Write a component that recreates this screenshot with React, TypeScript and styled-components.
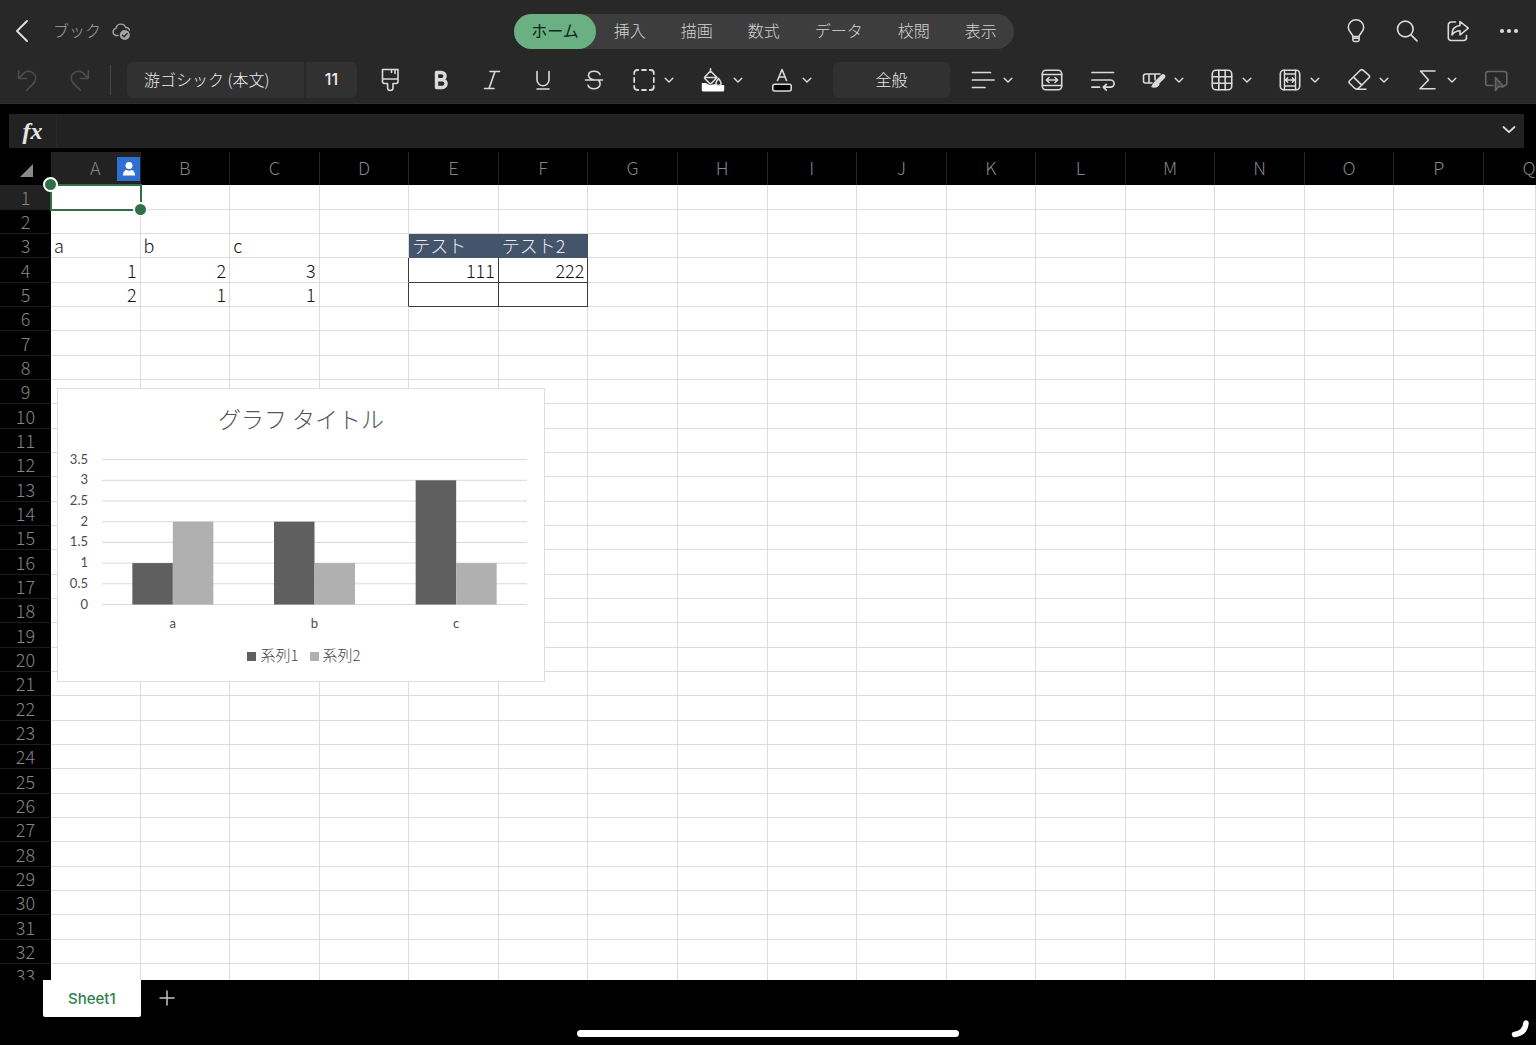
import React from "react";
import styled, { createGlobalStyle, css } from "styled-components";

const jp = `"Noto Sans CJK JP", "Noto Sans", sans-serif`;
const ui = `Inter, "Noto Sans CJK JP", sans-serif`;
const green = "#2f7048";

const GlobalStyle = createGlobalStyle`
  * { box-sizing: border-box; }
  html, body, #root { height: 100%; }
  body { margin: 0; background: #000; overflow: hidden; font-family: ${jp}; }
  button { appearance: none; border: 0; margin: 0; padding: 0; background: none; color: inherit; font: inherit; cursor: pointer; }
`;

const Page = styled.div`
  display: flex;
  flex-direction: column;
  height: 100vh;
  background: #000;
`;

/* ---------- Ribbon ---------- */

const Ribbon = styled.header`
  flex: none;
  background: #282828;
  color: #d6d6d6;
  border-bottom: 1px solid #2f2f2f;
`;

const TitleBar = styled.div`
  display: grid;
  grid-template-columns: 1fr auto 1fr;
  align-items: center;
  height: 56px;
  padding: 6px 2px 0 0;
`;

const TitleLeft = styled.div`
  display: flex;
  align-items: center;
  color: #a4a4a4;
`;

const BackButton = styled.button`
  display: grid;
  place-items: center;
  width: 44px;
  height: 32px;
  margin-right: 9px;
  color: #e0e0e0;
`;

const BookName = styled.h1`
  margin: 0 10px 0 0;
  padding-bottom: 2px;
  font-size: 16px;
  font-weight: 300;
  line-height: 24px;
`;

const Tabs = styled.nav`
  display: flex;
  gap: 1px;
  height: 35px;
  margin-right: 6px;
  border-radius: 18px;
  background: #3d3d3d;
`;

const Tab = styled.button<{ $active?: boolean }>`
  padding: 0 17px 2px;
  border-radius: 18px;
  font-size: 16px;
  font-weight: 300;
  line-height: 24px;
  color: #d4d4d4;
  ${(p) => p.$active && css`background: #6bb083; color: #10281a; font-weight: 400;`}
`;

const TitleActions = styled.div`
  display: flex;
  justify-content: flex-end;
`;

const ToolBar = styled.div`
  display: flex;
  align-items: center;
  height: 47px;
  padding: 0 15px 0 2px;
`;

const ToolButton = styled.button<{ $tone?: string }>`
  display: grid;
  place-items: center;
  flex: none;
  width: 51px;
  height: 36px;
  color: ${(p) => p.$tone ?? "#dadada"};
`;

const MenuButton = styled.button`
  display: flex;
  align-items: center;
  flex: none;
  gap: 8px;
  width: 69px;
  height: 36px;
  padding-left: 13px;
  color: #dadada;
`;

const Divider = styled.span`
  flex: none;
  width: 1px;
  height: 30px;
  margin: 0 16px 0 6px;
  background: #474747;
`;

const Field = styled.button<{ $width: number; $align?: string; $side?: "left" | "right"; $weight?: number }>`
  flex: none;
  width: ${(p) => p.$width}px;
  height: 36px;
  padding: 0 17px 2px;
  border-radius: ${(p) => (p.$side === "left" ? "6px 0 0 6px" : p.$side === "right" ? "0 6px 6px 0" : "6px")};
  background: #313131;
  color: #ececec;
  font-family: ${(p) => (p.$weight ? ui : jp)};
  font-size: 16px;
  font-weight: ${(p) => p.$weight ?? 300};
  line-height: 24px;
  text-align: ${(p) => p.$align ?? "center"};
  white-space: nowrap;
`;

const FieldPair = styled.div`
  display: flex;
  gap: 2px;
  margin-right: 7px;
`;

const NumberFormat = styled.div`
  display: flex;
  margin: 0 8px 0 7px;
`;

const ToolsEnd = styled.div`
  display: flex;
  flex: 1;
  justify-content: space-between;
  ${MenuButton} { width: 68px; }
`;

/* ---------- Formula bar ---------- */

const FormulaBar = styled.div`
  display: flex;
  flex: none;
  height: 34px;
  margin: 10px 12px 4px 9px;
  background: #222;
`;

const FxButton = styled.button`
  width: 48px;
  border-right: 1px solid #282828;
  color: #e6e6e6;
  font: italic bold 24px/32px "Liberation Serif", serif;
`;

const FormulaInput = styled.input`
  flex: 1;
  min-width: 0;
  padding: 0 8px;
  border: 0;
  outline: 0;
  background: transparent;
  color: #e6e6e6;
  font: 16px/24px ${jp};
`;

const ExpandButton = styled.button`
  display: grid;
  place-items: center;
  width: 30px;
  height: 30px;
  color: #dcdcdc;
`;

/* ---------- Sheet ---------- */

const SheetArea = styled.main`
  position: relative;
  flex: 1;
  min-height: 0;
  overflow: hidden;
`;

const Grid = styled.table`
  width: 100%;
  table-layout: fixed;
  border-collapse: separate;
  border-spacing: 0;
  font-size: 18px;
  font-weight: 300;
  line-height: 24px;
`;

const HeadCol = styled.col`
  width: 51px;
`;

const TailCol = styled.col`
  width: 52px;
`;

const Corner = styled.td`
  height: 33px;
  padding: 3px 18px 0 0;
  text-align: right;
  svg { display: block; margin-left: auto; }
`;

const ColHead = styled.th<{ $active?: boolean; $last?: boolean }>`
  position: relative;
  height: 33px;
  padding: 0 0 4px;
  overflow: hidden;
  border-right: 1px solid #262626;
  background: ${(p) => (p.$active ? "#222" : "#000")};
  color: #858585;
  font-weight: 300;
  text-align: center;
  ${(p) => p.$last && css`border-right: 0; span { display: block; width: 90px; }`}
`;

const UserBadge = styled.i`
  position: absolute;
  right: -1px;
  top: 5px;
  display: grid;
  place-items: center;
  width: 24px;
  height: 24px;
  background: #2e6fd1;
`;

const Row = styled.tr`
  height: 24px;
  &:nth-child(3n + 1) { height: 25px; }
`;

const RowHead = styled.th<{ $active?: boolean }>`
  padding: 0;
  border-bottom: 1px solid #1c1c1c;
  background: ${(p) => (p.$active ? "#222" : "#000")};
  color: #858585;
  font-weight: 300;
  line-height: 23px;
  text-align: center;
`;

type Edge = { $right?: boolean; $bottom?: boolean; $title?: boolean; $num?: boolean };

const Cell = styled.td<Edge>`
  position: relative;
  padding: 0 3px;
  border-right: 1px solid ${(p) => (p.$right ? "#3c3c3c" : "#dcdcdc")};
  border-bottom: 1px solid ${(p) => (p.$bottom ? "#3c3c3c" : "#dcdcdc")};
  background: #fff;
  color: #111;
  line-height: 23px;
  white-space: nowrap;
  text-align: ${(p) => (p.$num ? "right" : "left")};
  ${(p) => p.$title && css`background: #44546a; border-color: #44546a; color: #e8ecf2;`}
`;

const Selection = styled.div`
  position: absolute;
  inset: -1px -2px -2px -1px;
  z-index: 1;
  border: 2px solid ${green};
`;

const Handle = styled.i<{ $end?: boolean }>`
  position: absolute;
  z-index: 2;
  width: 15px;
  height: 15px;
  border: 2px solid #fff;
  border-radius: 50%;
  background: ${green};
  ${(p) => (p.$end ? "right: -8px; bottom: -8px;" : "left: -8px; top: -8px;")}
`;

/* ---------- Chart ---------- */

const ChartCard = styled.figure`
  position: absolute;
  left: 57px;
  top: 236px;
  display: flex;
  flex-direction: column;
  align-items: center;
  width: 488px;
  height: 294px;
  margin: 0;
  border: 1px solid #dedede;
  background: #fff;
  color: #595959;
`;

const ChartTitle = styled.figcaption`
  padding-top: 13px;
  font-size: 23px;
  font-weight: 300;
  line-height: 32px;
  color: #555;
`;

const Plot = styled.svg`
  display: block;
  width: 486px;
  height: 188px;
  margin-top: 14px;
  text { font: 13px Lato, sans-serif; fill: #4c4c4c; }
`;

const Legend = styled.div`
  display: flex;
  gap: 11px;
  margin-top: 8px;
  padding-left: 6px;
  font-size: 15px;
  font-weight: 300;
  line-height: 22px;
  color: #444;
`;

const LegendItem = styled.span<{ $color: string }>`
  display: flex;
  align-items: center;
  gap: 4px;
  &::before {
    content: "";
    width: 9px;
    height: 9px;
    margin-top: 3px;
    background: ${(p) => p.$color};
  }
`;

/* ---------- Footer ---------- */

const Footer = styled.footer`
  position: relative;
  display: flex;
  flex: none;
  flex-direction: column;
  justify-content: space-between;
  height: 65px;
  padding-bottom: 8px;
`;

const SheetTabs = styled.div`
  display: flex;
  padding-left: 43px;
`;

const SheetTab = styled.button`
  height: 37px;
  padding: 0 25px;
  border-radius: 0 0 2px 2px;
  background: #fff;
  color: #2f8050;
  font: 500 15px/24px ${ui};
`;

const AddSheet = styled.button`
  display: grid;
  place-items: center;
  width: 52px;
  height: 36px;
  color: #c4c4c4;
`;

const HomeIndicator = styled.div`
  align-self: center;
  width: 382px;
  height: 7px;
  border-radius: 4px;
  background: #fff;
`;

const CornerMark = styled.svg`
  position: absolute;
  right: 4px;
  bottom: 4px;
`;

/* ---------- Icons ---------- */

const Icon = ({ children, w = 24, sw = 1.6 }: { children: React.ReactNode; w?: number; sw?: number }) => (
  <svg width={w} height={w} viewBox={`0 0 ${w} ${w}`} fill="none" stroke="currentColor" strokeWidth={sw} strokeLinecap="round" strokeLinejoin="round" aria-hidden="true">
    {children}
  </svg>
);

const Chevron = () => <Icon w={10} sw={1.4}><path d="M1.2 3.2 5 7l3.800-3.800" /></Icon>;

const icons = {
  back: <Icon sw={1.9}><path d="M17 2 7 12l10 10" /></Icon>,
  cloud: (
    <Icon w={20} sw={1.4}>
      <path d="M7 14.5H5.2A3.6 3.6 0 0 1 5 7.4 5 5 0 0 1 14.7 6.600a3.500 3.500 0 0 1 3.700 2.400" />
      <circle cx="13.800" cy="14" r="5" fill="currentColor" stroke="none" />
      <path d="m11.500 14.200 1.600 1.500 3-3.200" stroke="#282828" />
    </Icon>
  ),
  bulb: <Icon><path d="M8.900 17.500C8.500 14.500 4.300 12.700 4.300 8.500a7.700 7.700 0 0 1 15.400 0c0 4.200-4.200 6-4.600 9M8.900 17.500h6.200v3.200a1.800 1.800 0 0 1-1.800 1.800h-2.600a1.800 1.800 0 0 1-1.800-1.800zM9 19.300h6" /></Icon>,
  search: <Icon sw={1.7}><circle cx="10.300" cy="10" r="7.800" /><path d="m16 15.800 6 6" /></Icon>,
  share: <Icon><path d="M9.500 3H5.300a3 3 0 0 0-3 3v12.500a3 3 0 0 0 3 3h12.200a3 3 0 0 0 3-3v-2" /><path d="M14 2.500v4c-5.500.400-8 4-8 9.500 2-3 4.500-4.300 8-4.300V16l8.300-6.800z" /></Icon>,
  more: <Icon><g fill="currentColor" stroke="none"><circle cx="5" cy="12" r="2.100" /><circle cx="12" cy="12" r="2.100" /><circle cx="19" cy="12" r="2.100" /></g></Icon>,
  undo: <Icon><path d="M2.700 2.500v8h8M2.900 10.300l5-5.200c5.300-5 14.500 1.200 11 8.400-.800 1.500-4 4.500-8.200 8.800" /></Icon>,
  redo: <Icon><path d="M21.300 2.500v8h-8M21.100 10.300l-5-5.200c-5.300-5-14.500 1.200-11 8.400.800 1.500 4 4.500 8.200 8.800" /></Icon>,
  brush: <Icon><path d="M4.500 1.500h15.500v12a2 2 0 0 1-2 2h-3v4.300a2.700 2.700 0 0 1-5.400 0v-4.300H6.500a2 2 0 0 1-2-2zM4.500 11h15.500M13.500 1.500v3M17 1.500v4" /></Icon>,
  bold: <Icon sw={3.400}><path d="M7.500 4.500h5a3.600 3.600 0 0 1 0 7.200h-5zM7.500 11.700h5.700a3.900 3.900 0 0 1 0 7.800H7.500z" /></Icon>,
  italic: <Icon><path d="M10 3.500h9.500M4.500 20.500H14M15 3.500l-6 17" /></Icon>,
  underline: <Icon><path d="M6 3.500v8.300a6 6 0 0 0 12 0V3.500M6 21h12" /></Icon>,
  strike: <Icon><path d="M18 6.500c-.700-2-3-3.300-5.800-3.300-3.400 0-5.700 1.700-5.700 4.200 0 3 3 3.800 5.500 4.600M3.500 12h17M17 12.800c2.600 3.700.300 8-5 8-3 0-5.200-1.300-6-3.500" /></Icon>,
  borders: <Icon sw={1.800}><path d="M2.200 6V5a3 3 0 0 1 3-3h1M10 2h4M17.800 2h1a3 3 0 0 1 3 3v1M21.800 10v4M21.800 18v1a3 3 0 0 1-3 3h-1M14 22h-4M6.200 22h-1a3 3 0 0 1-3-3v-1M2.200 14v-4" /></Icon>,
  fill: (
    <Icon>
      <path d="M.800 15h4l4 2 6-1 2 1h6.400v5a1.500 1.500 0 0 1-1.500 1.500H2.300A1.500 1.500 0 0 1 .800 22z" fill="#fff" stroke="none" />
      <path d="m9.500 3-5.500 5.700a1.500 1.500 0 0 0 0 2l4.500 4.500a1.500 1.500 0 0 0 2 0L16 9.500zM9.500 3V.800M3.800 9.500h12" fill="#282828" />
      <path d="M17.500 10.500c1.500 2 2.500 3.500 2.500 4.600a2.500 2.500 0 0 1-5 0c0-1.100 1-2.600 2.500-4.600z" fill="#282828" />
    </Icon>
  ),
  fontColor: <Icon><path d="M7.500 12.500 12 1.500l4.500 11M9 9h6" /><rect x="2.800" y="16.200" width="18.400" height="6.800" rx="2" fill="#000" /></Icon>,
  align: <Icon sw={1.700}><path d="M1.500 4.500h18M1.500 12H23M1.500 19.500H14" /></Icon>,
  merge: <Icon><rect x="2.300" y="2.300" width="19.400" height="19.400" rx="3.500" /><path d="M2.300 6.500h19.400M2.300 17.500h19.400M6.500 12h11M9 9.500 6.300 12 9 14.500M15 9.500l2.700 2.500-2.700 2.500" /></Icon>,
  wrap: <Icon sw={1.700}><path d="M1 4.500h21.500M1 12h18.500a3.600 3.600 0 0 1 0 7.200h-7M1 19.200h7.500M15.300 16.300l-3 2.900 3 2.900" /></Icon>,
  cellStyle: <Icon><path d="M10 15H3.500a2 2 0 0 1-2-2V8a2 2 0 0 1 2-2H18M7 6v9M13 6v6" /><path d="M21 8.500 15.500 14" strokeWidth={4.600} /><path d="M14.500 13c-3.500.500-3.500 3.500-5.500 6 3.500 1.500 8 .500 8.700-3z" fill="currentColor" stroke="none" /></Icon>,
  table: <Icon><rect x="2.300" y="2.300" width="19.400" height="19.400" rx="3.500" /><path d="M2.300 8.800h19.400M2.300 15.200h19.400M8.800 2.300v19.400M15.200 2.300v19.400" /></Icon>,
  format: <Icon><rect x="2.300" y="2.300" width="19.400" height="19.400" rx="3.500" /><path d="M6.500 2.300v19.400M17.500 2.300v19.400M6.500 6h11M6.500 18h11M7.500 12h9M9.700 9.800 7.500 12l2.200 2.200M14.300 9.800l2.200 2.200-2.200 2.200" strokeWidth={1.400} /></Icon>,
  eraser: <Icon><path d="M13.300 2.300 2.600 12.800a1.800 1.800 0 0 0 0 2.500l5 4.900a3 3 0 0 0 4 0L22 9.800a1.800 1.800 0 0 0 0-2.500l-5.700-5a2.200 2.200 0 0 0-3 0zM6.500 9.200l8.300 8M9.500 21.300H19" /></Icon>,
  sum: <Icon><path d="M20 3H5.500l8 9-8.500 8.800h15" /></Icon>,
  pointer: <Icon><path d="M9 17.500H4a2.300 2.300 0 0 1-2.300-2.300V5.800A2.300 2.300 0 0 1 4 3.500h16.500a2.300 2.300 0 0 1 2.300 2.300v9.400a2.300 2.300 0 0 1-2.300 2.300" /><path d="M11.500 9.500v13l3-3.800h5.300z" fill="#444" /></Icon>,
};

/* ---------- Data ---------- */

const tabNames = ["ホーム", "挿入", "描画", "数式", "データ", "校閲", "表示"];
const columns = "ABCDEFGHIJKLMNOPQ".split("");
const rows = Array.from({ length: 33 }, (_, i) => i + 1);

const values: Record<string, string | number> = {
  A3: "a", B3: "b", C3: "c",
  A4: 1, B4: 2, C4: 3,
  A5: 2, B5: 1, C5: 1,
  E3: "テスト", F3: "テスト2", E4: 111, F4: 222,
};

const edges = (col: string, row: number): Edge => {
  const inRows = row === 4 || row === 5;
  const inCols = col === "E" || col === "F";
  return {
    $title: row === 3 && inCols,
    $right: inRows && (col === "D" || inCols),
    $bottom: inRows && inCols,
  };
};

const series = [
  { name: "系列1", color: "#5f5f5f", data: [1, 2, 3] },
  { name: "系列2", color: "#b0b0b0", data: [2, 1, 1] },
];
const categories = ["a", "b", "c"];
const ticks = [0, 0.5, 1, 1.5, 2, 2.5, 3, 3.5];

const plot = { left: 44, right: 469, base: 156.5, unit: 41.4, bar: 40.5 };

const Chart = () => {
  const slot = (plot.right - plot.left) / categories.length;
  return (
    <ChartCard>
      <ChartTitle>グラフ タイトル</ChartTitle>
      <Plot viewBox="0 0 486 188" role="img" aria-label="グラフ タイトル">
        {ticks.map((t) => {
          const y = plot.base - t * plot.unit;
          return (
            <g key={t}>
              <line x1={plot.left} x2={plot.right} y1={y} y2={y} stroke="#d9d9d9" />
              <text x={30} y={y + 4} textAnchor="end">{t}</text>
            </g>
          );
        })}
        {categories.map((c, i) => {
          const mid = plot.left + slot * (i + 0.5);
          return (
            <g key={c}>
              {series.map((s, k) => (
                <rect key={s.name} x={mid + (k - 1) * plot.bar} y={plot.base - s.data[i] * plot.unit} width={plot.bar} height={s.data[i] * plot.unit} fill={s.color} />
              ))}
              <text x={mid} y={180} textAnchor="middle">{c}</text>
            </g>
          );
        })}
      </Plot>
      <Legend>
        {series.map((s) => <LegendItem key={s.name} $color={s.color}>{s.name}</LegendItem>)}
      </Legend>
    </ChartCard>
  );
};

const Tool = ({ icon, label, tone }: { icon: keyof typeof icons; label: string; tone?: string }) => (
  <ToolButton aria-label={label} $tone={tone}>{icons[icon]}</ToolButton>
);

const Menu = ({ icon, label }: { icon: keyof typeof icons; label: string }) => (
  <MenuButton aria-label={label} aria-haspopup="menu">{icons[icon]}<Chevron /></MenuButton>
);

export default function App() {
  return (
    <Page>
      <GlobalStyle />
      <Ribbon>
        <TitleBar>
          <TitleLeft>
            <BackButton aria-label="戻る">{icons.back}</BackButton>
            <BookName>ブック</BookName>
            {icons.cloud}
          </TitleLeft>
          <Tabs>
            {tabNames.map((t, i) => <Tab key={t} $active={i === 0}>{t}</Tab>)}
          </Tabs>
          <TitleActions>
            <Tool icon="bulb" label="ヒント" />
            <Tool icon="search" label="検索" />
            <Tool icon="share" label="共有" />
            <Tool icon="more" label="その他" />
          </TitleActions>
        </TitleBar>
        <ToolBar>
          <Tool icon="undo" label="元に戻す" tone="#4c4c4c" />
          <Tool icon="redo" label="やり直し" tone="#4c4c4c" />
          <Divider />
          <FieldPair>
            <Field $width={177} $align="left" $side="left">游ゴシック (本文)</Field>
            <Field $width={51} $side="right" $weight={500}>11</Field>
          </FieldPair>
          <Tool icon="brush" label="書式のコピー" />
          <Tool icon="bold" label="太字" />
          <Tool icon="italic" label="斜体" />
          <Tool icon="underline" label="下線" />
          <Tool icon="strike" label="取り消し線" />
          <Menu icon="borders" label="罫線" />
          <Menu icon="fill" label="塗りつぶしの色" />
          <Menu icon="fontColor" label="フォントの色" />
          <NumberFormat><Field $width={117}>全般</Field></NumberFormat>
          <ToolsEnd>
            <Menu icon="align" label="配置" />
            <Tool icon="merge" label="セルの結合" />
            <Tool icon="wrap" label="折り返し" />
            <Menu icon="cellStyle" label="セルのスタイル" />
            <Menu icon="table" label="挿入と削除" />
            <Menu icon="format" label="セルのサイズ" />
            <Menu icon="eraser" label="クリア" />
            <Menu icon="sum" label="オート SUM" />
            <Tool icon="pointer" label="選択" tone="#666" />
          </ToolsEnd>
        </ToolBar>
      </Ribbon>

      <FormulaBar>
        <FxButton aria-label="関数の挿入">fx</FxButton>
        <FormulaInput aria-label="数式" />
        <ExpandButton aria-label="展開"><Icon w={14} sw={1.8}><path d="m1.500 5 5.500 5.200L12.500 5" /></Icon></ExpandButton>
      </FormulaBar>

      <SheetArea>
        <Grid>
          <colgroup>
            <HeadCol />
            {columns.slice(0, -1).map((c) => <col key={c} />)}
            <TailCol />
          </colgroup>
          <thead>
            <tr>
              <Corner>
                <svg width="13" height="13" viewBox="0 0 13 13" aria-hidden="true"><path d="M13 0v13H0z" fill="#8a8a8a" /></svg>
              </Corner>
              {columns.map((c) => (
                <ColHead key={c} scope="col" $active={c === "A"} $last={c === "Q"}>
                  <span>{c}</span>
                  {c === "A" && (
                    <UserBadge>
                      <svg width="14" height="16" viewBox="0 0 14 16" fill="#fff" aria-hidden="true">
                        <circle cx="7" cy="4.500" r="3.500" />
                        <path d="M1 14.500c0-4 2-5.500 3.500-5.500 1.500 1 3.500 1 5 0 1.500 0 3.500 1.500 3.500 5.500z" />
                      </svg>
                    </UserBadge>
                  )}
                </ColHead>
              ))}
            </tr>
          </thead>
          <tbody>
            {rows.map((r) => (
              <Row key={r}>
                <RowHead scope="row" $active={r === 1}>{r}</RowHead>
                {columns.map((c) => {
                  const v = values[c + r];
                  return (
                    <Cell key={c} {...edges(c, r)} $num={typeof v === "number"}>
                      {v}
                      {c === "A" && r === 1 && <><Selection /><Handle /><Handle $end /></>}
                    </Cell>
                  );
                })}
              </Row>
            ))}
          </tbody>
        </Grid>
        <Chart />
      </SheetArea>

      <Footer>
        <SheetTabs>
          <SheetTab>Sheet1</SheetTab>
          <AddSheet aria-label="シートの追加"><Icon w={16} sw={1.500}><path d="M8 1v14M1 8h14" /></Icon></AddSheet>
        </SheetTabs>
        <HomeIndicator />
        <CornerMark width="22" height="22" viewBox="0 0 22 22" fill="none" stroke="#fff" strokeWidth="5.500" strokeLinecap="round" aria-hidden="true">
          <path d="M16 4c-.500 6-4 10.500-11.500 11.500" />
        </CornerMark>
      </Footer>
    </Page>
  );
}
